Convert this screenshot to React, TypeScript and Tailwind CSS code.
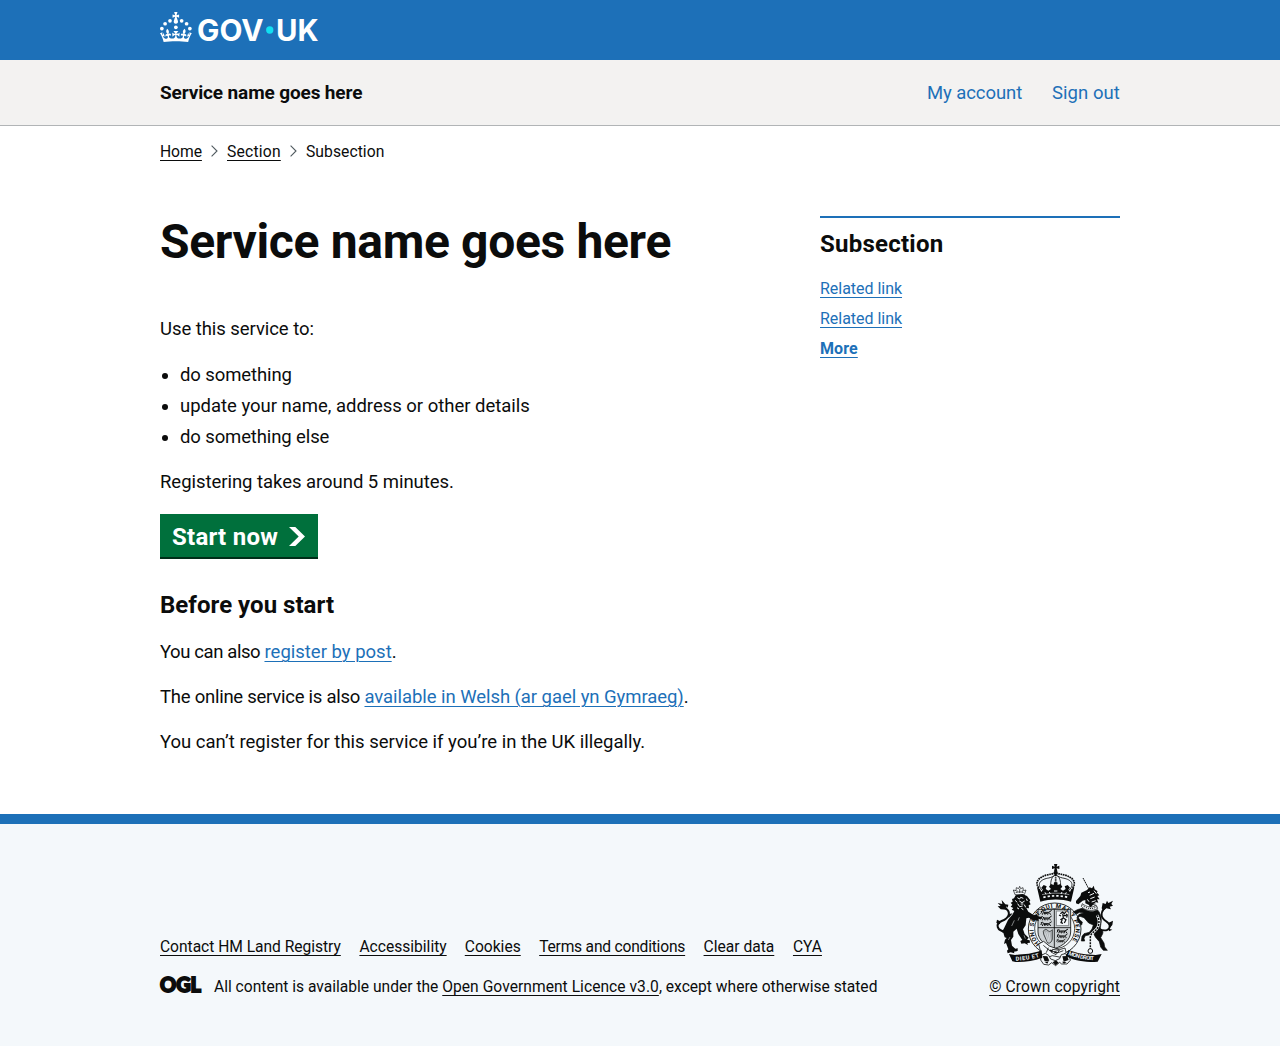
import React from "react";

function CrownLogo() {
  return (
    <svg viewBox="0 0 324 60" width="162" height="30" fill="white" role="img" aria-label="GOV.UK" className="block overflow-visible">
      <circle cx="20" cy="17.6" r="3.7" />
      <circle cx="10.2" cy="23.5" r="3.7" />
      <circle cx="3.7" cy="33.2" r="3.7" />
      <circle cx="31.7" cy="30.6" r="3.7" />
      <circle cx="43.3" cy="17.6" r="3.7" />
      <circle cx="53.2" cy="23.5" r="3.7" />
      <circle cx="59.7" cy="33.2" r="3.7" />
      <path d="M33.1,9.8c.2-.1.3-.3.5-.5l4.6,2.4v-6.8l-4.6,1.5c-.1-.2-.3-.3-.5-.5l1.9-5.9h-6.7l1.9,5.9c-.2.1-.3.3-.5.5l-4.6-1.5v6.8l4.6-2.4c.1.2.3.3.5.5l-2.6,8c-.9,2.8,1.2,5.7,4.1,5.7h0c3,0,5.1-2.9,4.1-5.7l-2.6-8ZM37,37.9s-3.4,3.8-4.1,6.1c2.2,0,4.2-.5,6.4-2.8l-.7,8.5c-2-2.8-4.4-4.1-5.7-3.8.1,3.1.5,6.7,5.8,7.2,3.7.3,6.7-1.5,7-3.8.4-2.6-2-4.3-3.7-1.6-1.4-4.5,2.4-6.1,4.9-3.2-1.9-4.5-1.8-7.7,2.4-10.9,3,4,2.6,7.3-1.2,11.1,2.4-1.3,6.2,0,4,4.6-1.2-2.8-3.7-2.2-4.2.2-.3,1.7.7,3.7,3,4.2,1.9.3,4.7-.9,7-5.9-1.3,0-2.4.7-3.9,1.7l2.4-8c.6,2.3,1.4,3.7,2.2,4.5.6-1.6.5-2.8,0-5.3l5,1.8c-2.6,3.6-5.2,8.7-7.3,17.5-7.4-1.1-15.7-1.7-24.5-1.7h0c-8.8,0-17.1.6-24.5,1.7-2.1-8.9-4.7-13.9-7.3-17.5l5-1.8c-.5,2.5-.6,3.7,0,5.3.8-.8,1.6-2.3,2.2-4.5l2.4,8c-1.5-1-2.6-1.7-3.9-1.7,2.3,5,5.2,6.2,7,5.9,2.3-.4,3.3-2.4,3-4.2-.5-2.4-3-3.1-4.2-.2-2.2-4.6,1.6-6,4-4.6-3.7-3.7-4.2-7.1-1.2-11.1,4.2,3.2,4.3,6.4,2.4,10.9,2.5-2.8,6.3-1.3,4.9,3.2-1.8-2.7-4.1-1-3.7,1.6.3,2.3,3.3,4.1,7,3.8,5.4-.5,5.7-4.2,5.8-7.2-1.3-.2-3.7,1-5.7,3.8l-.7-8.5c2.2,2.3,4.2,2.7,6.4,2.8-.7-2.3-4.1-6.1-4.1-6.1h10.6Z" />
      <text x="74" y="57.4" fontFamily="Inter" fontWeight="700" fontSize="59" textLength="133" lengthAdjust="spacingAndGlyphs">GOV</text>
      <circle cx="219.5" cy="36" r="7.3" fill="#11e0f1" />
      <text x="232" y="57.4" fontFamily="Inter" fontWeight="700" fontSize="59" textLength="85" lengthAdjust="spacingAndGlyphs">UK</text>
    </svg>
  );
}

function Passant({ x, y, s = 1 }: { x: number; y: number; s?: number }) {
  return (
    <path
      transform={`translate(${x} ${y}) scale(${s})`}
      fill="none"
      strokeWidth="3"
      d="M2 3l5-2 4 4 14 0 6-4M4 5l-3 4M9 5l-3 7M12 6l2 6M24 5l-2 7M27 6l4 6M30 2l4-3M3 1v4M13 8h8"
    />
  );
}

function Crest() {
  return (
    <svg viewBox="51 27 348 306" width="116" height="102" fill="#0b0c0c" stroke="#0b0c0c" strokeWidth="0" className="block overflow-visible" aria-hidden="true">
      {/* crown */}
      <path d="M222 27h10l-2 8 8-3v10l-8-2 2 9h-10l2-9-8 2V32l8 3z" />
      <circle cx="227" cy="54" r="6.5" />
      <path d="M221 62c-7 8-9 16-9 30M233 62c7 8 9 16 9 30" fill="none" strokeWidth="2.4" />
      <path d="M227 60v32" fill="none" strokeWidth="5" strokeDasharray="4 2.5" />
      <path d="M187 106C166 84 186 72 206 69c9-2 15-5 20-9M267 106c21-22 1-34-19-37-9-2-15-5-20-9" fill="none" strokeWidth="2.6" />
      <path d="M176 99C162 78 180 66 200 60c10-2 16-3 22-5M278 99c14-21-4-33-24-39-10-2-16-3-22-5" fill="none" strokeWidth="5" strokeDasharray="5 2" />
      <path d="M171 97l9 5 4 9 5-7-5-6 7-8 9 4-3 8 8 5 8-5-6-7 6-8 8 3 1-8h10l1 8 8-3 6 8-6 7 8 5 8-5-3-8 9-4 7 8-5 6 5 7 4-9 9-5-10 43c-28-9-63-9-92 0z" />
      <path d="M190 127c24-6 50-6 74 0" fill="none" stroke="#f4f8fb" strokeWidth="5" strokeDasharray="7 6" />
      <path d="M186 119c26-6 56-6 82 0" fill="none" stroke="#f4f8fb" strokeWidth="1.6" />
      <path d="M208 111l3 6M246 111l-3 6M222 108h10M195 112l3 6M259 112l-3 6" stroke="#f4f8fb" strokeWidth="3" />

      {/* garter */}
      <ellipse cx="224" cy="222" rx="79" ry="78" fill="#f4f8fb" strokeWidth="2.6" />
      <ellipse cx="224" cy="221" rx="60" ry="60" fill="#f4f8fb" strokeWidth="2.2" />
      <path d="M174 163h98v68c0 24-24 42-49 50-25-8-49-26-49-50z" fill="#cdd2d5" strokeWidth="2.5" />
      <path d="M174 218h98M223 163v118" strokeWidth="2.5" />
      <Passant x={181} y={167} />
      <Passant x={181} y={184} />
      <Passant x={181} y={201} />
      <rect x="229" y="168" width="37" height="44" fill="#f4f8fb" stroke="#85898b" strokeWidth="3" />
      <path d="M241 176l7-5 5 5 5-6M248 176l2 13-9 5M250 189l8 5-5 10M243 183l-6-3M251 181l8 1M247 193l-4 10 6 2M260 188l2-8-4-3" fill="none" strokeWidth="3.6" />
      <path d="M190 229c4-8 10-7 14-2s9 1 13-3v28c-2 10-8 14-14 12l-12-26z" fill="#aeb3b6" strokeWidth="2" />
      <path d="M194 232l10 30M200 231l8 31M207 233l4 25" stroke="#f4f8fb" strokeWidth="1.6" />
      <Passant x={230} y={223} />
      <Passant x={230} y={238} s={0.95} />
      <Passant x={229} y={253} s={0.8} />
      <path id="garter-motto" d="M180 267A63 63 0 1 1 268 267" fill="none" />
      <text fontFamily="Roboto" fontWeight="700" fontSize="18">
        <textPath href="#garter-motto" textLength="284">HONI SOIT QUI MAL Y PENSE</textPath>
      </text>

      {/* lion supporter */}
      <path d="M105 119l-5-14 8 2 1-9 7 3 3-7 3 7 7-3 1 9 8-2-5 14z" fill="#f4f8fb" strokeWidth="2" />
      <path d="M107 113c8-3 16-3 24 0M119 102v12M111 106v6M127 106v6" fill="none" strokeWidth="2" />
      <path d="M107 121l20-4 14 6 10 13-3 4 4 8-6 3 1 9-8-1 6 11 17 11 8-4 4 7 10 2-2 7-7-2 1 8-8-4-6 3-15-10-8 2-2 21-8 12 5 14 12 11-5 6 8 2 1 7-8 1 2 6-10-5-10 1-3-8 6-3-12-18-5-16-10 9 0 15-7 10 3 17 10 9 7-1 0 8-11 2 1 5-11-3-9 3-2-8 4-4-7-19-6 3 3-13 5-5-6-2-4-14-5-2 6-9 4-8 9-19 14-17 5-10-8-4 5-5-8-4 5-6-5-6 6-3-2-8 6-2z" />
      <path d="M77 230C50 227 45 207 65 198c24-9 28-27 12-38l-13-4" fill="none" strokeWidth="6" strokeLinecap="round" />
      <path d="M79 164l-17-1-9-9 9-1-9-9 14 3-2-12 11 13 9 1-2 9-4-4zM61 199l-10-5-2 10 11 4M85 178l13-3-12 14z" />
      <path d="M112 128l7 4 3-5 8 3M118 138l8 5 8-5M113 146l6 9 9-2M133 149l4 8M106 136l5 6M139 131l3 7M122 147l8 0M111 158l6 4M124 160l6 4" fill="none" stroke="#f4f8fb" strokeWidth="3" />
      <path d="M103 196l-8 17M118 187l-4 10M90 246l-5 9M132 241l4 10" fill="none" stroke="#f4f8fb" strokeWidth="1.5" />

      {/* unicorn supporter */}
      <path d="M309 69l17 32" fill="none" strokeWidth="3" strokeDasharray="5 1.2" />
      <path d="M321 105l8-8 7 3 5-8 3 11 9 6-3 3 8 9-6 2 7 10-8 0 4 10-9-2 1 12-8-4-9 11-3-10-11-5 0-10-8 2-13 11-7-3 0-7 13-15 3-10z" />
      <path d="M324 113l6-2M329 121l13-6M331 131l13-5M335 141l12-4M342 107l7 9M322 133l5 7M341 147l8 0" stroke="#f4f8fb" strokeWidth="3" />
      <path d="M307 146c12 10 29 14 42 5l4 9c-14 10-38 8-49-6z" fill="#f4f8fb" strokeWidth="2" />
      <path d="M308 151c12 11 30 13 42 4" fill="none" strokeWidth="3" strokeDasharray="3 3" />
      <path strokeWidth="2" d="M278 172l14-8 14-4 12 6c12 6 26 3 34-2 8 8 12 20 12 32-1 14-4 20-2 26 6 4 8 8 6 14l-6 12 10 16 2 12 8 10-12 0-8-10-4-16-12-14-6-12-14 6-10 2-4 8 2 8-10 0 2-14 6-8 16-4 8-10 4-12-14-6-14-16-12-4-6 3 4 7 9 7-2 9-11-9-3-13 6-10 14-4-12-2-8 4-8-2-2-5z" />
      <path d="M357 222c20 9 33 3 32-10-1-12-23-15-24-31-1-11 7-22 19-30" fill="none" strokeWidth="5.5" strokeLinecap="round" />
      <path d="M365 160l3-16 9 3 4-10 4 7 14-7-5 10 5 5-10 3 4 8-14-3-9 7zM386 203l13-6-2 13-7 8M366 180l-8-9M386 221l11 3-10 5" />
      <path d="M351 181c6 9 8 22 3 34-5 15-21 16-23 31v37" fill="none" stroke="#f4f8fb" strokeWidth="8" />
      <path d="M351 181c6 9 8 22 3 34-5 15-21 16-23 31v37" fill="none" strokeWidth="4.5" strokeDasharray="6 3" />
      <circle cx="331" cy="288" r="7" fill="#f4f8fb" strokeWidth="3" />

      {/* buckle and plinth */}
      <path d="M176 267l15-8 17 14 30 11 17-5 3 13-15 15-26-5-18 7-16-15z" fill="#f4f8fb" strokeWidth="2.4" />
      <path d="M190 271l18 15 26 7 16-6M205 278l-6 15M238 286l-10 13-15-8 4-8z" fill="none" strokeWidth="2.4" />
      <path d="M209 286l9 3M223 291l7 2" strokeWidth="5" />
      <path d="M184 301l12-6 10 6 6 11 14 5 13-6 5-12 11-3 13 7 3 13-10 11-16 0-6-5-12 10-12-9-9 7-15-2-9-13z" fill="#f4f8fb" strokeWidth="2.4" />
      <path d="M188 303l14 1 6 13-14 2zM247 304l15-1 4 12-15 5zM218 322l10-6 8 7-9 8zM194 321l12-2-4 7zM246 320l14 1-8 5z" />

      {/* motto scroll */}
      <path d="M87 297l18 3c28-2 52-3 80-14l2 22c-26 10-55 14-80 13l-10-2z" />
      <path d="M365 297l-18 3c-30-2-52-3-81-15l-9 18c24 14 55 18 86 18l10-1z" />
      <path id="scroll-left" d="M107 317c25-1 51-4 76-13" fill="none" />
      <path id="scroll-right" d="M264 299c25 11 53 16 84 17" fill="none" />
      <g fill="#f4f8fb" fontFamily="Roboto" fontWeight="700" fontSize="17">
        <text><textPath href="#scroll-left" textLength="72">DIEU ET</textPath></text>
        <text><textPath href="#scroll-right" textLength="80">MON DROIT</textPath></text>
      </g>
    </svg>
  );
}

function OglLogo() {
  return (
    <svg width="41" height="17" viewBox="0 0 41 17" className="block shrink-0 overflow-visible" aria-label="Open Government Licence">
      <text x="0" y="15.7" fontFamily="Lato" fontWeight="900" fontSize="20.5" fill="#0b0c0c" stroke="#0b0c0c" strokeWidth="1.8" textLength="41" lengthAdjust="spacingAndGlyphs">OGL</text>
    </svg>
  );
}

function Chevron() {
  return (
    <svg width="7" height="12" viewBox="0 0 7 12" className="mt-px block" fill="none" stroke="#505a5f" strokeWidth="1.1">
      <path d="M.6.6 6 6 .6 11.4" />
    </svg>
  );
}

const under = "underline decoration-1 underline-offset-[3px]";
const blue = "text-[#1d70b8]";
const body = "h-[25px] whitespace-nowrap text-[18.5px] leading-[25px]";

const footerLinks = [
  { text: "Contact HM Land Registry", box: "w-[181px] tracking-[-0.03px]" },
  { text: "Accessibility", box: "w-[87px]" },
  { text: "Cookies", box: "w-[56px]" },
  { text: "Terms and conditions", box: "w-[146px] tracking-[-0.21px]" },
  { text: "Clear data", box: "w-[71px]" },
  { text: "CYA", box: "w-[29px]" },
];

export default function App() {
  return (
    <div className="flex h-[1046px] w-full flex-col bg-white font-[Roboto,sans-serif] text-[#0b0c0c]">
      <header className="h-[60px] bg-[#1d70b8]">
        <div className="mx-auto w-[960px] pt-3">
          <CrownLogo />
        </div>
      </header>

      <div className="h-[66px] border-b border-[#b1b4b6] bg-[#f3f2f1]">
        <div className="mx-auto flex h-[65px] w-[960px] items-center justify-between">
          <a className="text-[19px] leading-[25px] font-bold tracking-[-0.13px]">Service name goes here</a>
          <nav className={`mt-0.5 flex gap-[30px] ${body} ${blue}`}>
            <a className="w-[95px] tracking-[-0.08px]">My account</a>
            <a className="w-[68px] tracking-[0.06px]">Sign out</a>
          </nav>
        </div>
      </div>

      <div className="mx-auto flex h-[36px] w-[960px] items-end text-[15.7px] leading-5">
        <div className="w-[51px]"><a className={`tracking-[-0.08px] ${under}`}>Home</a></div>
        <span className="flex h-5 w-4 items-center pb-1"><Chevron /></span>
        <div className="w-[63px]"><a className={`tracking-[0.2px] ${under}`}>Section</a></div>
        <span className="flex h-5 w-4 items-center pb-1"><Chevron /></span>
        <span className="tracking-[0.04px]">Subsection</span>
      </div>

      <main className="mx-auto flex w-[960px] grow justify-between pt-[54px]">
        <div className="w-[630px]">
          <h1 className="mt-px mb-[50px] h-[50px] text-[48px] leading-[50px] font-bold tracking-[-0.33px] whitespace-nowrap">Service name goes here</h1>
          <p className={`mb-[21px] tracking-[-0.06px] ${body}`}>Use this service to:</p>
          <ul className="mb-5 flex list-disc flex-col gap-1.5 pl-5">
            <li className={`tracking-[-0.1px] ${body}`}>do something</li>
            <li className={`tracking-[-0.02px] ${body}`}>update your name, address or other details</li>
            <li className={`tracking-[-0.12px] ${body}`}>do something else</li>
          </ul>
          <p className={`tracking-[-0.04px] ${body}`}>Registering takes around 5 minutes.</p>
          <a className="mt-[19px] flex h-[43px] w-[158px] items-center bg-[#00703c] pt-[3px] pl-3 text-2xl leading-none font-bold text-white shadow-[0_2px_0_#002d18]">
            <span className="w-[117px] tracking-[0.25px] whitespace-nowrap">Start now</span>
            <svg width="16" height="19" viewBox="0 0 33 40" preserveAspectRatio="none" fill="white" className="-mt-0.5">
              <path d="M0 0h13l20 20-20 20H0l20-20z" />
            </svg>
          </a>
          <h2 className="mt-[33px] mb-5 text-2xl leading-[30px] font-bold tracking-[0.03px]">Before you start</h2>
          <p className={`mb-5 ${body}`}><span className="tracking-[-0.4px]">You can also </span><a className={`${blue} ${under}`}>register by post</a>.</p>
          <p className={`mb-5 tracking-[-0.06px] ${body}`}><span className="tracking-[-0.25px]">The online service is also </span><a className={`${blue} ${under}`}>available in Welsh (ar gael yn Gymraeg)</a>.</p>
          <p className={body}>You can’t register for this service if you’re in the UK illegally.</p>
        </div>

        <aside className="w-[300px]">
          <div className="border-t-2 border-[#1d70b8] pt-[11px]">
            <h2 className="mb-5 text-2xl leading-[30px] font-bold tracking-[0.24px]">Subsection</h2>
            <nav className={`flex flex-col items-start gap-2.5 text-[16px] leading-5 ${blue}`}>
              <a className={`tracking-[-0.03px] ${under}`}>Related link</a>
              <a className={`tracking-[-0.03px] ${under}`}>Related link</a>
              <a className={`font-bold tracking-[0.1px] ${under}`}>More</a>
            </nav>
          </div>
        </aside>
      </main>

      <footer className="h-[232px] border-t-10 border-[#1d70b8] bg-[#f4f8fb] text-[15.6px] leading-5">
        <div className="mx-auto flex h-[173px] w-[960px] items-end justify-between">
          <div>
            <nav className="mb-5 flex gap-[18.4px] whitespace-nowrap">
              {footerLinks.map((l) => (
                <a key={l.text} className={`${l.box} ${under}`}>{l.text}</a>
              ))}
            </nav>
            <div className="flex items-start gap-[13px] whitespace-nowrap">
              <div className="-mt-px"><OglLogo /></div>
              <p>All content is available under the <a className={`tracking-[0.04px] ${under}`}>Open Government Licence v3.0</a>, except where otherwise stated</p>
            </div>
          </div>
          <div className="flex flex-col items-end">
            <div className="mr-[7px] mb-[11px]"><Crest /></div>
            <a className={`tracking-[0.1px] whitespace-nowrap ${under}`}>© Crown copyright</a>
          </div>
        </div>
      </footer>
    </div>
  );
}
